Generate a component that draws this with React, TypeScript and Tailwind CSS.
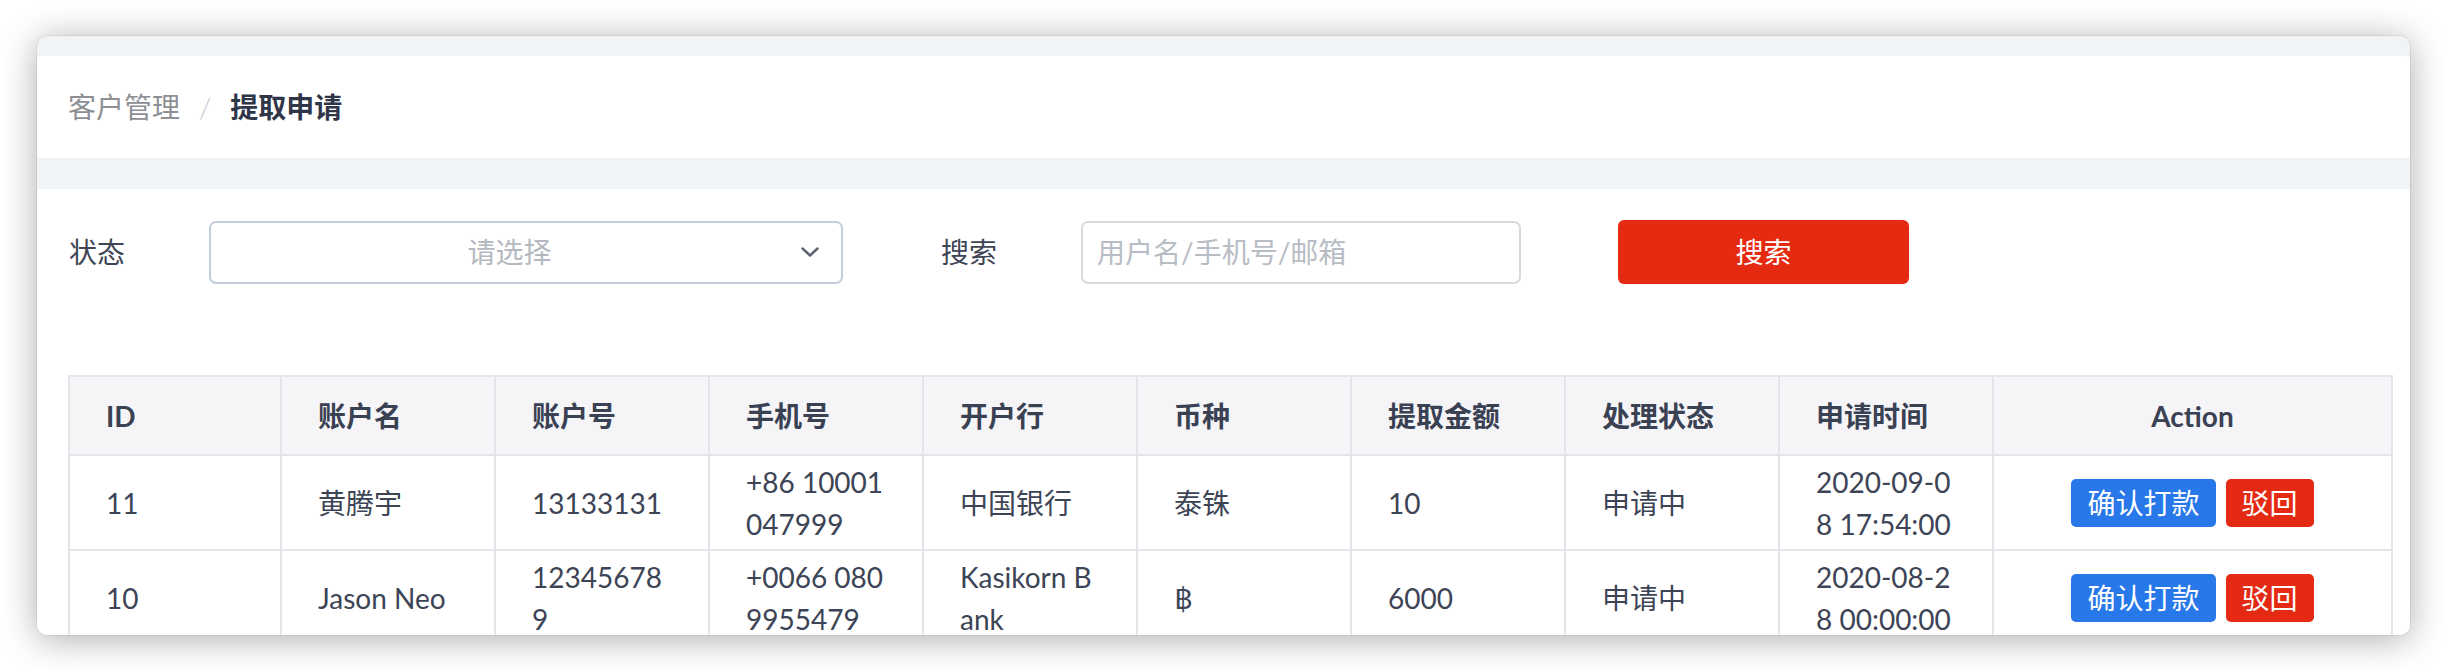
import React from "react";

type Row = string[][];

const headers = ["ID", "账户名", "账户号", "手机号", "开户行", "币种", "提取金额", "处理状态", "申请时间"];

const rows: Row[] = [
  [["11"], ["黄腾宇"], ["13133131"], ["+86 10001", "047999"], ["中国银行"], ["泰铢"], ["10"], ["申请中"], ["2020-09-0", "8 17:54:00"]],
  [["10"], ["Jason Neo"], ["12345678", "9"], ["+0066 080", "9955479"], ["Kasikorn B", "ank"], ["฿"], ["6000"], ["申请中"], ["2020-08-2", "8 00:00:00"]],
];

function Chevron() {
  return (
    <svg width="18" height="10" viewBox="0 0 18 10" fill="none" className="absolute right-[22px] top-1/2 -translate-y-1/2">
      <path d="M1.5 1.5 L9 8.5 L16.5 1.5" stroke="#5c6170" strokeWidth="2.4" strokeLinecap="round" strokeLinejoin="round" />
    </svg>
  );
}

export default function App() {
  return (
    <div
      className="min-h-screen bg-white pt-[36px] pl-[37px]"
      style={{ fontFamily: 'Lato, "Noto Sans CJK SC", "Noto Sans", sans-serif' }}
    >
      <div className="w-[2373px] h-[599px] overflow-hidden rounded-[10px] bg-[#f0f4f7] pt-[20px] shadow-[0_4px_36px_rgba(0,0,0,0.33),0_0_0_1px_rgba(0,0,0,0.05)]">
        {/* breadcrumb */}
        <div className="h-[102px] rounded-[4px] bg-white flex items-center pl-[31px] text-[28px]">
          <span className="text-[#8d8f94]">客户管理</span>
          <span className="mx-[19px] text-[#c5c8ce] font-light">/</span>
          <span className="font-bold text-[#30364a]">提取申请</span>
        </div>

        {/* content */}
        <div className="mt-[31px] h-full rounded-[4px] bg-white pl-[32px] pr-[17px] pt-[30px]">
          {/* filters */}
          <div className="flex items-center h-[66px] text-[28px] text-[#3f4555]">
            <label className="w-[140px]">状态</label>
            <div className="relative w-[634px] h-[63px] rounded-[7px] border-2 border-[#c3cddd] pl-[15px] pr-[48px] flex items-center justify-center">
              <span className="text-[#b4b8c0]">请选择</span>
              <Chevron />
            </div>
            <label className="ml-[98px] w-[140px]">搜索</label>
            <input
              placeholder="用户名/手机号/邮箱"
              className="w-[440px] h-[63px] rounded-[7px] border-2 border-[#d6d9de] px-[14px] text-[28px] outline-none placeholder:text-[#b8bcc4]"
            />
            <button className="ml-[97px] w-[291px] h-[64px] rounded-[6px] bg-[#e52a12] text-white text-[28px]">
              搜索
            </button>
          </div>

          {/* table */}
          <table className="mt-[90px] -ml-[1px] w-[2323px] table-fixed border-collapse border-2 border-[#d3d7de] text-[28px] leading-[42px] text-[#3c4455]">
            <colgroup>
              {headers.map((h, i) => (
                <col key={h} className={i === 0 ? "w-[212px]" : "w-[214px]"} />
              ))}
              <col className="w-[399px]" />
            </colgroup>
            <thead>
              <tr className="h-[79px] bg-[#f5f5f8] text-[#3a4153]">
                {headers.map((h) => (
                  <th key={h} className="border-2 border-[#e2e5e9] pl-[36px] text-left font-bold">
                    {h}
                  </th>
                ))}
                <th className="border-2 border-[#e2e5e9] text-center font-bold">Action</th>
              </tr>
            </thead>
            <tbody>
              {rows.map((row, i) => (
                <tr key={i} className={i === 0 ? "h-[95px]" : "h-[96px]"}>
                  {row.map((lines, j) => (
                    <td key={j} className="border-2 border-[#e2e5e9] pl-[36px] align-middle">
                      {lines.map((l) => (
                        <div key={l} className="whitespace-nowrap">
                          {l}
                        </div>
                      ))}
                    </td>
                  ))}
                  <td className="border-2 border-[#e2e5e9] align-middle">
                    <div className="flex justify-center gap-[10px]">
                      <button className="h-[48px] px-[16px] rounded-[5px] bg-[#2878ea] text-white leading-[48px]">确认打款</button>
                      <button className="h-[48px] px-[16px] rounded-[5px] bg-[#e42a12] text-white leading-[48px]">驳回</button>
                    </div>
                  </td>
                </tr>
              ))}
            </tbody>
          </table>
        </div>
      </div>
    </div>
  );
}
